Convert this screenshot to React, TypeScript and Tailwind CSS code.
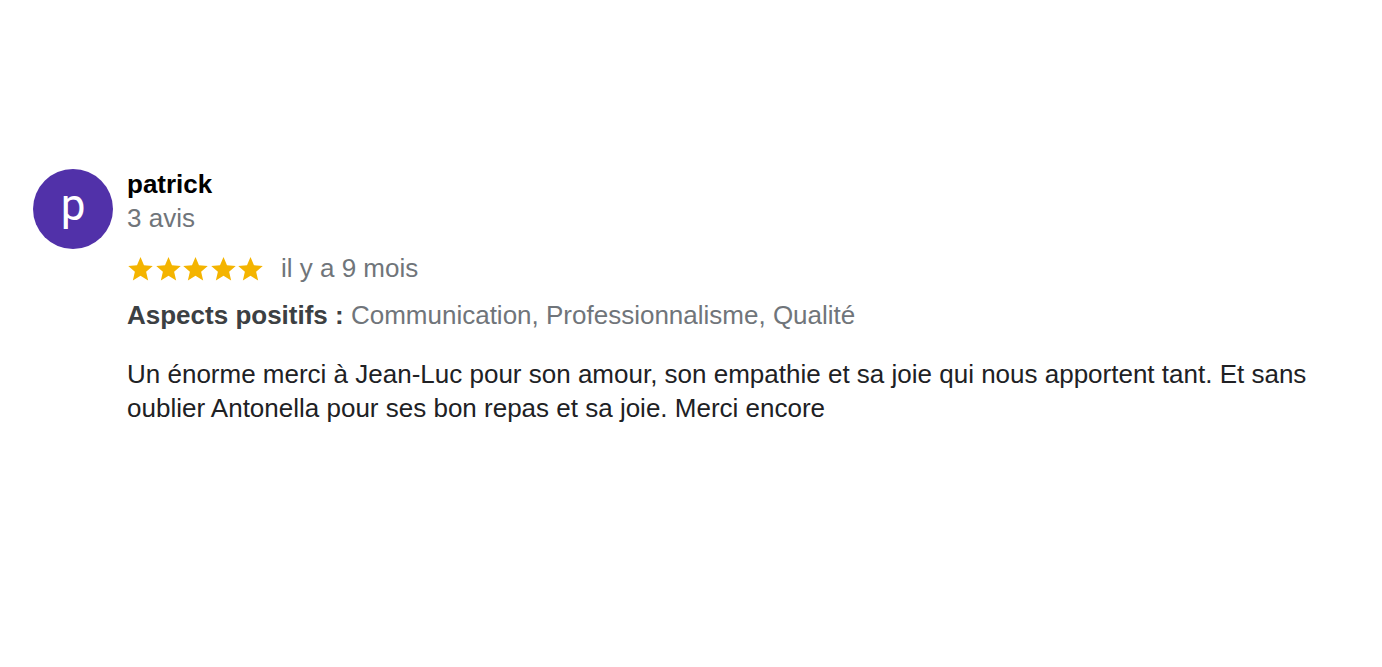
import React from 'react';

const Star = () => (
  <svg viewBox="0 0 24 24" className="w-[27px] h-[27px]" fill="#f4b400">
    <path d="M12 1.8l3.1 7.2 7.8.7-5.9 5.2 1.8 7.7L12 18.5l-6.8 4.1 1.8-7.7L1.1 9.7l7.8-.7z" />
  </svg>
);

const App = () => {
  return (
    <div className="w-[1382px] h-[667px] bg-white font-['Liberation_Sans',Arial,sans-serif]">
      <div className="flex gap-[14px] pl-[33px] pt-[169px] pr-[40px]">
        <div className="w-[80px] h-[80px] shrink-0 rounded-full bg-[#5131a9] flex items-center justify-center">
          <span className="text-white text-[44px] font-['Roboto',sans-serif] leading-none pb-[8px]">p</span>
        </div>
        <div className="flex flex-col">
          <div className="text-[26px] font-bold text-black leading-[30px]">patrick</div>
          <div className="text-[26px] text-[#70757a] leading-[30px] mt-[4px]">3 avis</div>
          <div className="flex items-center mt-[20px]">
            <div className="flex w-[137px] justify-between">
              <Star />
              <Star />
              <Star />
              <Star />
              <Star />
            </div>
            <span className="ml-[17px] text-[26px] text-[#70757a] leading-[30px]">il y a 9 mois</span>
          </div>
          <div className="text-[26px] leading-[30px] mt-[17px]">
            <span className="font-bold text-[#3c4043]">Aspects positifs : </span>
            <span className="text-[#70757a]">Communication, Professionnalisme, Qualité</span>
          </div>
          <p className="text-[26px] leading-[34px] text-[#202124] mt-[27px] max-w-[1200px]">
            Un énorme merci à Jean-Luc pour son amour, son empathie et sa joie qui nous apportent tant. Et sans oublier Antonella pour ses bon repas et sa joie. Merci encore
          </p>
        </div>
      </div>
    </div>
  );
};

export default App;
